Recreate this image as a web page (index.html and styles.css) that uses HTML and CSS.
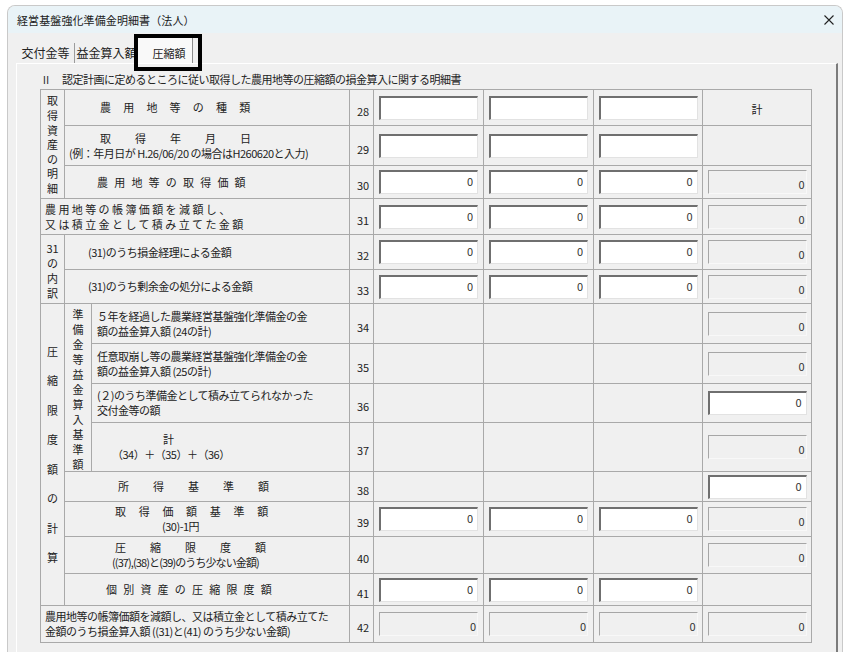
FILE: index.html
```html
<!DOCTYPE html>
<html lang="ja">
<head>
	<meta charset="UTF-8">
	<title>経営基盤強化準備金明細書（法人）</title>
	<link rel="stylesheet" href="styles.css">
</head>
<body>
	<div class="window">
		<div class="titlebar">
			<span class="title">経営基盤強化準備金明細書（法人）</span>
			<svg class="close" width="10" height="10" viewBox="0 0 10 10"><path d="M0.5 0.5L9.5 9.5M9.5 0.5L0.5 9.5" stroke="#222" stroke-width="1.1" fill="none"/></svg>
		</div>
		<div class="client">
			<div class="tabs">
				<div class="tab">交付金等</div>
				<div class="tab">益金算入額</div>
				<div class="tab cur">圧縮額</div>
				<div class="mark"></div>
			</div>
			<div class="panel">
				<p class="heading"><span class="roman">II</span>認定計画に定めるところに従い取得した農用地等の圧縮額の損金算入に関する明細書</p>
				<div class="sheet">
					<!-- 28 -->
					<div class="vt r3 lh14">取<br>得<br>資<br>産<br>の<br>明<br>細</div>
					<div class="lbl c2 p35 sp12">農用地等の種類</div>
					<div class="no">28</div>
					<div class="fld"><input class="ed" type="text"></div>
					<div class="fld"><input class="ed" type="text"></div>
					<div class="fld"><input class="ed" type="text"></div>
					<div class="fld sum">計</div>
					<!-- 29 -->
					<div class="lbl c2 p4">
						<span class="sp24 m31">取得年月日</span>
						<span>(例：年月日が H.26/06/20 の場合はH260620と入力)</span>
					</div>
					<div class="no">29</div>
					<div class="fld"><input class="ed" type="text"></div>
					<div class="fld"><input class="ed" type="text"></div>
					<div class="fld"><input class="ed" type="text"></div>
					<div class="fld"></div>
					<!-- 30 -->
					<div class="lbl c2 p32 sp6">農用地等の取得価額</div>
					<div class="no">30</div>
					<div class="fld"><input class="ed" type="text" value="0"></div>
					<div class="fld"><input class="ed" type="text" value="0"></div>
					<div class="fld"><input class="ed" type="text" value="0"></div>
					<div class="fld"><input class="ro" type="text" value="0" readonly></div>
					<!-- 31 -->
					<div class="lbl c3 p4 sp2">
						<span>農用地等の帳簿価額を減額し、</span>
						<span>又は積立金として積み立てた金額</span>
					</div>
					<div class="no">31</div>
					<div class="fld"><input class="ed" type="text" value="0"></div>
					<div class="fld"><input class="ed" type="text" value="0"></div>
					<div class="fld"><input class="ed" type="text" value="0"></div>
					<div class="fld"><input class="ro" type="text" value="0" readonly></div>
					<!-- 32 -->
					<div class="vt r2 lh15">31<br>の<br>内<br>訳</div>
					<div class="lbl c2 p23">(31)のうち損金経理による金額</div>
					<div class="no">32</div>
					<div class="fld"><input class="ed" type="text" value="0"></div>
					<div class="fld"><input class="ed" type="text" value="0"></div>
					<div class="fld"><input class="ed" type="text" value="0"></div>
					<div class="fld"><input class="ro" type="text" value="0" readonly></div>
					<!-- 33 -->
					<div class="lbl c2 p23">(31)のうち剰余金の処分による金額</div>
					<div class="no">33</div>
					<div class="fld"><input class="ed" type="text" value="0"></div>
					<div class="fld"><input class="ed" type="text" value="0"></div>
					<div class="fld"><input class="ed" type="text" value="0"></div>
					<div class="fld"><input class="ro" type="text" value="0" readonly></div>
					<!-- 34 -->
					<div class="vt r8 lh29">圧<br>縮<br>限<br>度<br>額<br>の<br>計<br>算</div>
					<div class="vt r4 lh15">準<br>備<br>金<br>等<br>益<br>金<br>算<br>入<br>基<br>準<br>額</div>
					<div class="lbl p5">
						<span>５年を経過した農業経営基盤強化準備金の金</span>
						<span>額の益金算入額 (24の計)</span>
					</div>
					<div class="no">34</div>
					<div class="fld"></div>
					<div class="fld"></div>
					<div class="fld"></div>
					<div class="fld"><input class="ro" type="text" value="0" readonly></div>
					<!-- 35 -->
					<div class="lbl p5">
						<span>任意取崩し等の農業経営基盤強化準備金の金</span>
						<span>額の益金算入額 (25の計)</span>
					</div>
					<div class="no">35</div>
					<div class="fld"></div>
					<div class="fld"></div>
					<div class="fld"></div>
					<div class="fld"><input class="ro" type="text" value="0" readonly></div>
					<!-- 36 -->
					<div class="lbl p5">
						<span>(２)のうち準備金として積み立てられなかった</span>
						<span>交付金等の額</span>
					</div>
					<div class="no">36</div>
					<div class="fld"></div>
					<div class="fld"></div>
					<div class="fld"></div>
					<div class="fld"><input class="ed" type="text" value="0"></div>
					<!-- 37 -->
					<div class="lbl p20">
						<span class="m51">計</span>
						<span>（34）＋（35）＋（36）</span>
					</div>
					<div class="no">37</div>
					<div class="fld"></div>
					<div class="fld"></div>
					<div class="fld"></div>
					<div class="fld"><input class="ro" type="text" value="0" readonly></div>
					<!-- 38 -->
					<div class="lbl c2 p53 sp24">所得基準額</div>
					<div class="no">38</div>
					<div class="fld"></div>
					<div class="fld"></div>
					<div class="fld"></div>
					<div class="fld"><input class="ed" type="text" value="0"></div>
					<!-- 39 -->
					<div class="lbl c2 p50">
						<span class="sp13">取得価額基準額</span>
						<span class="m47">(30)-1円</span>
					</div>
					<div class="no">39</div>
					<div class="fld"><input class="ed" type="text" value="0"></div>
					<div class="fld"><input class="ed" type="text" value="0"></div>
					<div class="fld"><input class="ed" type="text" value="0"></div>
					<div class="fld"><input class="ro" type="text" value="0" readonly></div>
					<!-- 40 -->
					<div class="lbl c2 p47">
						<span class="sp24 m3">圧縮限度額</span>
						<span class="narrow">((37),(38)と(39)のうち少ない金額)</span>
					</div>
					<div class="no">40</div>
					<div class="fld"></div>
					<div class="fld"></div>
					<div class="fld"></div>
					<div class="fld"><input class="ro" type="text" value="0" readonly></div>
					<!-- 41 -->
					<div class="lbl c2 p41 sp6">個別資産の圧縮限度額</div>
					<div class="no">41</div>
					<div class="fld"><input class="ed" type="text" value="0"></div>
					<div class="fld"><input class="ed" type="text" value="0"></div>
					<div class="fld"><input class="ed" type="text" value="0"></div>
					<div class="fld"></div>
					<!-- 42 -->
					<div class="lbl c3 p4">
						<span>農用地等の帳簿価額を減額し、又は積立金として積み立てた</span>
						<span>金額のうち損金算入額 ((31)と(41) のうち少ない金額)</span>
					</div>
					<div class="no">42</div>
					<div class="fld"><input class="ro" type="text" value="0" readonly></div>
					<div class="fld"><input class="ro" type="text" value="0" readonly></div>
					<div class="fld"><input class="ro" type="text" value="0" readonly></div>
					<div class="fld"><input class="ro" type="text" value="0" readonly></div>
				</div>
			</div>
		</div>
	</div>
</body>
</html>
```

FILE: styles.css
```css
*{
	box-sizing: border-box;
}
html, body{
	margin: 0;
	padding: 0;
	background: #fff;
	overflow: hidden;
}
body{
	font-family: "Noto Sans CJK JP", "Liberation Sans", sans-serif;
	font-size: 11px;
	color: #222;
}
p{
	margin: 0;
}

/* window frame */
.window{
	margin: 5px 7px 0;
	height: 660px;
	border: 1px solid #c9c9c9;
	border-bottom: 0;
	border-radius: 8px 8px 0 0;
	background: #f0f0f0;
	overflow: hidden;
}
.titlebar{
	display: flex;
	align-items: center;
	justify-content: space-between;
	height: 27px;
	padding: 0 8px 0 9px;
	background: #e9f3f7;
}
.title{
	font-size: 11px;
	letter-spacing: 0.1px;
	color: #1a1a1a;
}
.close{
	display: block;
}
.client{
	padding-left: 8px;
}

/* tabs */
.tabs{
	position: relative;
	display: flex;
	align-items: flex-end;
	height: 30px;
	padding-left: 1px;
	font-size: 12px;
}
.tab{
	height: 20px;
	line-height: 20px;
	text-align: center;
	white-space: nowrap;
	overflow: hidden;
}
.tab:nth-child(1){
	width: 58px;
	border-right: 1px solid #9c9c9c;
}
.tab:nth-child(2){
	width: 63px;
}
.tab.cur{
	width: 55px;
	height: 25px;
	padding: 5px 0 0 8px;
	line-height: 20px;
	font-size: 11px;
	background: #f9f9f9;
	border-right: 1px solid #8c8c8c;
}
.mark{
	position: absolute;
	z-index: 10;
	left: 118px;
	top: 1px;
	width: 68px;
	height: 37px;
	border: 4px solid #000;
}

/* tab page */
.panel{
	width: 822px;
	height: 600px;
	padding: 8px 0 0 23px;
	border-top: 1px solid #fff;
	border-left: 1px solid #fff;
	border-right: 2px solid #7c7c7c;
}
.heading{
	height: 14px;
	line-height: 14px;
	margin-bottom: 3px;
	letter-spacing: -0.5px;
	white-space: nowrap;
}
.roman{
	display: inline-block;
	width: 22px;
	padding-left: 3px;
	font-family: "Liberation Sans", sans-serif;
	font-size: 10px;
	letter-spacing: 0.5px;
}

/* sheet grid */
.sheet{
	display: grid;
	grid-template-columns: 23px 26px 257px 23px 109px 109px 108px 108px;
	grid-template-rows: 35px 39px 32px 35px 34px 33px 39px 39px 38px 48px 29px 34px 36px 31px 36px;
	gap: 1px;
	width: 772px;
	border: 1px solid #a9a9a9;
	background: #a9a9a9;
}
.sheet > div{
	background: #f0f0f0;
}
.c2{ grid-column: span 2; }
.c3{ grid-column: span 3; }
.r2{ grid-row: span 2; }
.r3{ grid-row: span 3; }
.r4{ grid-row: span 4; }
.r8{ grid-row: span 8; }

.vt{
	display: flex;
	align-items: center;
	justify-content: center;
	text-align: center;
}
.lh14{ line-height: 14.6px; padding-top: 1px; }
.lh15{ line-height: 15px; padding-top: 3px; }
.lh29{ line-height: 29.5px; }

.lbl{
	display: flex;
	flex-direction: column;
	justify-content: center;
	line-height: 15px;
	letter-spacing: -0.5px;
	white-space: nowrap;
}
.p4{ padding-left: 4px; }
.p5{ padding-left: 5px; }
.p20{ padding-left: 20px; }
.p23{ padding-left: 23px; }
.p32{ padding-left: 32px; }
.p35{ padding-left: 35px; }
.p41{ padding-left: 41px; }
.p47{ padding-left: 47px; }
.p50{ padding-left: 50px; }
.p53{ padding-left: 53px; }
.m3{ margin-left: 3px; }
.m31{ margin-left: 31px; }
.m47{ margin-left: 47px; }
.m51{ margin-left: 51px; }
.sp2{ letter-spacing: 2.4px; }
.sp6{ letter-spacing: 6.2px; }
.sp12{ letter-spacing: 12.2px; }
.sp13{ letter-spacing: 12.7px; }
.sp24{ letter-spacing: 24px; }
.narrow{ letter-spacing: -0.9px; }

.no{
	display: flex;
	align-items: center;
	justify-content: center;
	padding: 6px 0 0 3px;
}

/* entry fields */
.fld{
	display: flex;
	align-items: center;
	justify-content: center;
}
.sum{
	padding-top: 2px;
}
.fld input{
	width: 99px;
	height: 24px;
	margin: 0;
	font: inherit;
	font-size: 11px;
	color: #333;
	text-align: right;
	outline: none;
}
.ed{
	padding: 0 4px 3px 0;
	background: #fff;
	border-top: 2px solid #6f6f6f;
	border-left: 2px solid #6f6f6f;
	border-right: 1px solid #e2e2e2;
	border-bottom: 1px solid #e2e2e2;
}
.ro{
	padding: 4px 1px 0 0;
	background: #f0f0f0;
	border-top: 1px solid #a6a6a6;
	border-left: 1px solid #a6a6a6;
	border-right: 1px solid #f8f8f8;
	border-bottom: 1px solid #f8f8f8;
}
```
